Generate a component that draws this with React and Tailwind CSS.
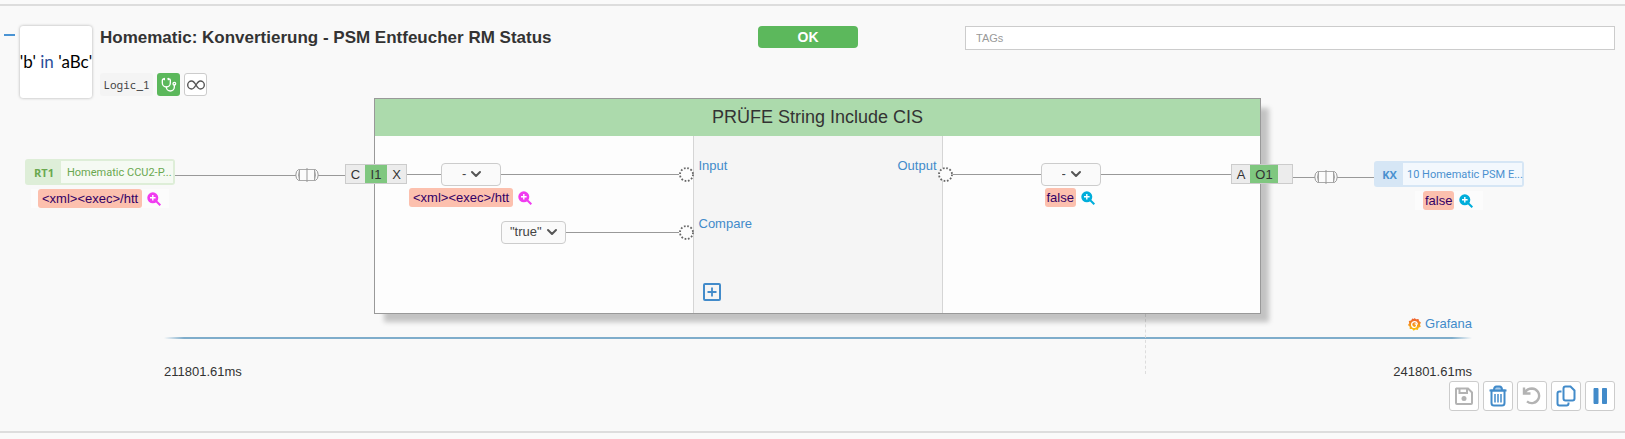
import { ChevronDown, Stethoscope } from 'lucide-react'
import clsx from 'clsx'

function Wire({ className = 'flex-1' }) {
  return <span className={clsx('h-px bg-[#999]', className)} />
}

function Capsule() {
  return (
    <svg className="shrink-0" width="36" height="14" viewBox="-6 0 36 14" fill="#fcfcfc" stroke="#999">
      <path d="M-6 7.500H30" />
      <path d="M4.500 1.500h15v11h-15z" stroke="#aaa" />
      <path d="M4.500 1.500H3.500Q.8 3 .8 7t2.700 5.500h1Q2.800 7 4.500 1.500zM19.500 1.500h1Q23.200 3 23.200 7t-2.700 5.500h-1Q21.200 7 19.500 1.500zM12 0v14" />
    </svg>
  )
}

function Port() {
  return (
    <svg className="shrink-0" width="15" height="15" viewBox="0 0 15 15">
      <circle cx="7.500" cy="7.500" r="6.500" fill="#fdfdfd" stroke="#666" strokeWidth="1.800" strokeDasharray="1.700 1.700" />
    </svg>
  )
}

function Terminal({ before, name, after, className }) {
  return (
    <div className={clsx('relative flex h-5 w-[62px] shrink-0 border border-[#ccc] bg-[#ececec] text-center text-[13px] leading-5 text-[#333]', className)}>
      <span className="flex-1">{before}</span>
      <span className={clsx('bg-[#7fc77f]', after ? 'w-[22px]' : 'w-7')}>{name}</span>
      <span className={after ? 'flex-1' : 'w-3.5'}>{after}</span>
    </div>
  )
}

function Choice({ label, value, className }) {
  return (
    <div className={clsx('relative shrink-0', className)}>
      <select
        aria-label={label}
        defaultValue={value}
        className="block h-[23px] w-full appearance-none rounded border border-[#ccc] bg-[#fafafa] text-[13px] leading-5 text-[#444]"
      >
        <option>{value}</option>
      </select>
      <ChevronDown className="pointer-events-none absolute inset-y-0 my-auto" size={16} strokeWidth={3} color="#555" />
    </div>
  )
}

function Value({ text, color, wide, className }) {
  return (
    <div className={clsx('flex items-center gap-[5px]', className)}>
      <span className={clsx('rounded-[3px] bg-[#fcc0ae] text-[13px] leading-[19px] text-[#306]', wide ? 'px-1' : 'px-0.5')}>{text}</span>
      <button type="button" aria-label="Wert anzeigen" className={color}>
        <svg width="14" height="14" viewBox="0 0 14 14">
          <circle cx="5.800" cy="5.800" r="5.500" fill="currentColor" />
          <path d="M9 9l4.300 4.300" stroke="currentColor" strokeWidth="2" />
          <path d="M5.800 3v5.600M3 5.800h5.600" stroke="#fff" strokeWidth="1.400" />
        </svg>
      </button>
    </div>
  )
}

function Tag({ id, text, tone }) {
  const green = tone === 'green'
  return (
    <div
      className={clsx(
        'flex h-[26px] w-[150px] shrink-0 self-start rounded-[3px] p-0.5 text-[11px] leading-6',
        green ? 'bg-[#deeed8] text-[#6aa84f]' : 'bg-[#d6e6f5] text-[#4a90cf]',
      )}
    >
      <b className={clsx("shrink-0 text-center font-['Open_Sans',sans-serif]", green ? 'w-[34px]' : 'w-[27px]')}>{id}</b>
      <span className={clsx('min-w-0 flex-1 font-[Roboto,sans-serif] whitespace-nowrap', green ? 'bg-[#f5faf3] pl-1.5' : 'bg-[#f3f8fd] pl-1')}>{text}</span>
    </div>
  )
}

function ToolButton({ label, className, children }) {
  return (
    <button type="button" aria-label={label} className={clsx('flex size-[30px] items-center justify-center rounded-[3px] border border-[#ccc] bg-white', className)}>
      <svg width="20" height="22" viewBox="0 0 20 22" fill="none" stroke="currentColor" strokeWidth="2">
        {children}
      </svg>
    </button>
  )
}

function Header() {
  return (
    <header className="flex items-start pt-5 pr-2.5 pl-1">
      <button type="button" aria-label="Einklappen" className="mt-2 h-0.5 w-[11px] bg-[#4a94d4]" />
      <div className="ml-[5px] flex size-[72px] shrink-0 justify-center rounded-[3px] bg-white font-[Lato,sans-serif] text-[17px] leading-[72px] whitespace-pre text-black shadow-[0_0_3px_#aaa]">
        <span>
          'b' <span className="text-[#2b4f9b]">in</span> 'aBc'
        </span>
      </div>
      <div className="ml-2 w-[658px]">
        <h1 className="h-[47px] text-[17px] leading-6 font-bold text-[#333]">Homematic: Konvertierung - PSM Entfeucher RM Status</h1>
        <div className="flex gap-1">
          <code className="h-[23px] w-[53px] rounded-[3px] bg-[#f4f4f4] text-center font-['Noto_Sans_Mono','DejaVu_Sans_Mono',monospace] text-[11px] leading-6 text-[#444]">Logic_1</code>
          <button type="button" aria-label="Diagnose" className="flex size-[23px] items-center justify-center rounded-[3px] bg-[#5cb85c] text-white">
            <Stethoscope size={16} />
          </button>
          <button type="button" aria-label="Endlos" className="flex size-[23px] items-center justify-center rounded-[3px] border border-[#ccc] bg-white text-[#555]">
            <svg width="18" height="10" viewBox="0 0 18 10" fill="none" stroke="currentColor" strokeWidth="1.400">
              <path d="M9 5C7.500 2.500 6.500 1 4.700 1a4 4 0 0 0 0 8C6.500 9 7.500 7.500 9 5s2.500-4 4.300-4a4 4 0 0 1 0 8C11.500 9 10.500 7.500 9 5z" />
            </svg>
          </button>
        </div>
      </div>
      <button type="button" className="h-[22px] w-[100px] shrink-0 rounded bg-[#5cb85c] text-[14px] leading-[22px] font-bold text-white">
        OK
      </button>
      <input
        aria-label="TAGs"
        placeholder="TAGs"
        className="ml-[107px] h-6 min-w-0 flex-1 border border-[#ccc] bg-white px-2.5 text-[11px] placeholder:text-[#999]"
      />
    </header>
  )
}

function Block() {
  return (
    <div className="relative z-10 flex h-[216px] flex-1 flex-col border border-[#999] bg-[#fdfdfd] shadow-[9px_9px_5px_-1px_rgba(0,0,0,0.22)]">
      <h2 className="h-[37px] bg-[#acdaac] text-center text-[18px] leading-9 text-[#333]">PRÜFE String Include CIS</h2>
      <div className="flex flex-1">
        <div className="flex-1 pt-[26px]">
          <div className="flex h-6 items-center">
            <Terminal before="C" name="I1" after="X" className="-ml-[30px]" />
            <Wire className="w-[34px]" />
            <Choice label="Input" value="-" className="w-[60px] *:first:pl-5 *:last:right-[17px]" />
            <Wire />
            <div className="relative -mr-px">
              <Port />
            </div>
          </div>
          <Value wide text="<xml><exec>/htt" color="text-[#f03cf0]" className="mt-0.5 ml-[34px]" />
          <div className="mt-[13px] flex h-6 items-center pl-[126px]">
            <Choice label="Compare" value={'"true"'} className="w-[65px] *:first:pl-2 *:last:right-1.5" />
            <Wire />
            <div className="relative -mr-px">
              <Port />
            </div>
          </div>
        </div>
        <div className="flex w-[250px] flex-col border-x border-[#d5d5d5] bg-[#f5f5f5] px-[5px] pt-5 pb-3 text-[13px] leading-5 text-[#428bca]">
          <div className="flex h-[58px] justify-between">
            <span>Input</span>
            <span>Output</span>
          </div>
          <span>Compare</span>
          <button type="button" aria-label="Eingang hinzufügen" className="mt-auto ml-1 self-start">
            <svg width="18" height="18" viewBox="0 0 18 18" fill="none" stroke="currentColor" strokeWidth="2">
              <rect x="1" y="1" width="16" height="16" rx="1" />
              <path d="M9 4.500v9M4.500 9h9" strokeWidth="1.800" />
            </svg>
          </button>
        </div>
        <div className="flex-1 pt-[26px]">
          <div className="flex h-6 items-center">
            <div className="relative -ml-[5px]">
              <Port />
            </div>
            <Wire className="w-[88px]" />
            <Choice label="Output" value="-" className="w-[60px] *:first:pl-5 *:last:right-[17px]" />
            <Wire />
            <Terminal before="A" name="O1" className="-mr-[33px]" />
          </div>
          <Value text="false" color="text-[#00aedb]" className="mt-0.5 ml-[102px]" />
        </div>
      </div>
    </div>
  )
}

function Diagram() {
  return (
    <div className="flex">
      <div className="w-[374px] shrink-0 pt-[61px] pr-[29px] pl-[25px]">
        <div className="flex h-8 items-center">
          <Tag id="RT1" text="Homematic CCU2-P..." tone="green" />
          <Wire />
          <Capsule />
          <Wire className="w-5" />
        </div>
        <div className="-mt-0.5 ml-1.5 flex w-[138px] bg-[#fcfcfc] pl-[7px]">
          <Value wide text="<xml><exec>/htt" color="text-[#f03cf0]" />
        </div>
      </div>
      <Block />
      <div className="w-[364px] shrink-0 pt-[63px] pl-8">
        <div className="flex h-8 items-center">
          <Wire className="w-[15px]" />
          <Capsule />
          <Wire className="w-[30px]" />
          <Tag id="KX" text="10 Homematic PSM E..." tone="blue" />
        </div>
        <div className="-mt-0.5 ml-[122px] flex w-[68px] bg-[#fcfcfc] pl-2">
          <Value text="false" color="text-[#00aedb]" />
        </div>
      </div>
    </div>
  )
}

function Timeline() {
  return (
    <div className="relative mr-[153px] ml-[164px] pt-px text-[13px] leading-[18px] text-[#333]">
      <span className="absolute top-0 left-3/4 h-[60px] border-l border-dashed border-[#ddd]" />
      <a href="#grafana" className="flex items-center justify-end gap-1 text-[#428bca]">
        <svg width="13" height="13" viewBox="0 0 13 13" fill="none">
          <defs>
            <linearGradient id="flame" x1="0" y1="0" x2="0" y2="1">
              <stop stopColor="#ee5a32" />
              <stop offset="1" stopColor="#fbca0a" />
            </linearGradient>
          </defs>
          <path d="M6.500 0l1.600 1.300 2.400-.4.500 2.200 1.900 1.400-.9 2 .7 2.200-2.100 1-.8 2.200-2.200-.4-2 1.300-1.500-1.700-2.400 0 0-2.300L0 7.100l1.200-1.900L.8 2.900l2.300-.5L4.300.5l1.700.6z" fill="url(#flame)" />
          <path d="M9.500 6.500Q9 3.500 6.300 3.600 3.500 4 3.600 7q.6 2.600 3 2.500 1.900-.2 1.900-2T6.600 6" stroke="#fff" strokeWidth="1.200" />
        </svg>
        Grafana
      </a>
      <div className="mt-1 h-0.5 bg-[linear-gradient(to_right,transparent,#7fadcb_20px,#7fadcb_calc(100%-20px),transparent)]" />
      <div className="mt-6 flex justify-between">
        <span>211801.61ms</span>
        <span>241801.61ms</span>
      </div>
    </div>
  )
}

function Toolbar() {
  return (
    <div className="flex justify-end gap-1 pr-2.5 pb-5">
      <ToolButton label="Speichern" className="text-[#b3b3b3]">
        <path d="M2.500 3.500H14l4 4v10.500q0 1-1 1H3q-1 0-1-1v-14zM5.500 4v4h7.500V4" />
        <circle cx="10" cy="13.500" r="2.500" fill="currentColor" stroke="none" />
      </ToolButton>
      <ToolButton label="Löschen" className="text-[#428bca]">
        <path d="M3.500 5.500h13v12.500q0 2.500-2.500 2.500h-8q-2.500 0-2.500-2.500z" />
        <path d="M1.500 5.500h17M6 5q0-3.500 2.500-3.500h3Q14 1.500 14 5" fill="#a9cbea" />
        <path d="M7 9v8.500M10 9v8.500M13 9v8.500" strokeWidth="1.500" />
      </ToolButton>
      <ToolButton label="Zurücksetzen" className="text-[#b3b3b3]">
        <path d="M2 2.500v6h6.500M2.500 8Q5 3.500 10 3.500a7.300 7.300 0 1 1-5 12.800" strokeWidth="2.400" />
      </ToolButton>
      <ToolButton label="Kopieren" className="text-[#428bca]">
        <path d="M9.500 1.500h5l4 4v8q0 2-2 2h-7q-2 0-2-2v-10q0-2 2-2zM5.500 6.500h-2q-2 0-2 2v10q0 2 2 2h7q2 0 2-2v-1" />
      </ToolButton>
      <ToolButton label="Pause" className="text-[#428bca]">
        <path d="M4 3.500h4v15H4zM12.500 3.500h4v15h-4z" fill="currentColor" strokeWidth="1" strokeLinejoin="round" />
      </ToolButton>
    </div>
  )
}

export default function App() {
  return (
    <div className="min-h-screen bg-[#fafafa] pt-1 font-['Liberation_Sans',Arial,sans-serif]">
      <main className="border-y-2 border-[#ddd] bg-[#f9f9f9]">
        <Header />
        <Diagram />
        <Timeline />
        <Toolbar />
      </main>
    </div>
  )
}
